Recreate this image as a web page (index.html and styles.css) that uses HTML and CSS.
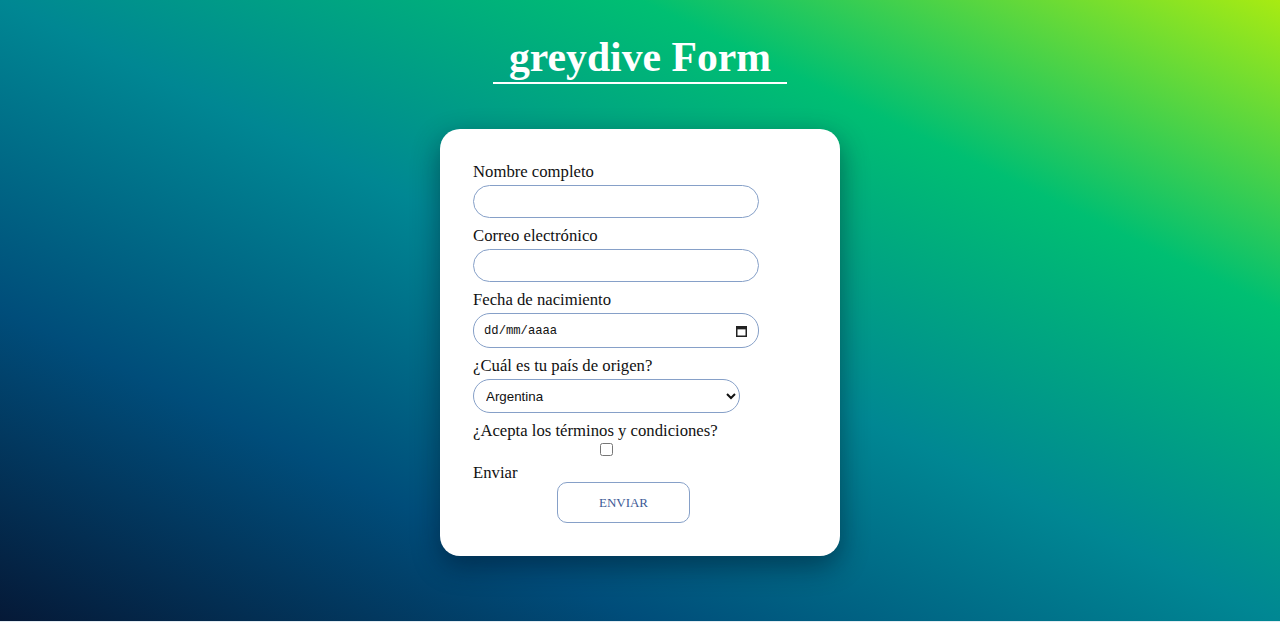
FILE: index.html
```html
<!DOCTYPE html>
<html lang="es">
<head>
<meta charset="utf-8">
<title>greydive Form</title>
<link rel="stylesheet" href="styles.css">
</head>
<body>
<div class="page">
  <h1 class="title">greydive Form</h1>
  <form class="card">
    <label class="label" for="nombre">Nombre completo</label>
    <input class="field" id="nombre" type="text">
    <label class="label" for="correo">Correo electrónico</label>
    <input class="field" id="correo" type="email">
    <label class="label">Fecha de nacimiento</label>
    <div class="field date-field">
      <span class="date-text">dd/mm/aaaa</span>
      <svg class="cal" width="11" height="12" viewBox="0 0 11 12" aria-hidden="true">
        <rect x="0.75" y="1.75" width="9.5" height="9.5" fill="none" stroke="#222" stroke-width="1.5"/>
        <rect x="0.75" y="1.75" width="9.5" height="2.6" fill="#222"/>
      </svg>
    </div>
    <label class="label" for="pais">¿Cuál es tu país de origen?</label>
    <select class="field select" id="pais">
      <option>Argentina</option>
      <option>Brasil</option>
      <option>Chile</option>
    </select>
    <label class="label" for="terminos">¿Acepta los términos y condiciones?</label>
    <input class="check" id="terminos" type="checkbox">
    <label class="label label-last">Enviar</label>
    <button class="btn" type="button">ENVIAR</button>
  </form>
</div>
</body>
</html>
```
FILE: styles.css
```css
html {
  background: #e4ecf3;
}
body {
  margin: 0;
}
.page {
  height: 621px;
  box-sizing: border-box;
  padding-top: 33px;
  display: flex;
  flex-direction: column;
  align-items: center;
  background: linear-gradient(to right top, #051937, #004d7a, #008793, #00bf72, #a8eb12);
}
.title {
  margin: 0;
  padding: 0 16px;
  font-family: "Liberation Serif", "Times New Roman", serif;
  font-weight: 700;
  font-size: 41.7px;
  line-height: 49px;
  color: #ffffff;
  border-bottom: 2px solid #ffffff;
}
.card {
  margin-top: 45px;
  width: 400px;
  box-sizing: border-box;
  padding: 33px 33px 33px;
  background: #ffffff;
  border-radius: 20px;
  box-shadow: 0 10px 28px rgba(0, 10, 30, 0.45);
  display: flex;
  flex-direction: column;
  align-items: flex-start;
}
.label {
  font-family: "Liberation Serif", "Times New Roman", serif;
  font-size: 16.7px;
  line-height: 20px;
  color: #111111;
  margin-bottom: 3px;
}
.label-last {
  margin-bottom: -1px;
}
.field {
  width: 286px;
  height: 33px;
  box-sizing: border-box;
  margin: 0 0 8px 0;
  border: 1px solid #86a0c8;
  border-radius: 17px;
  background: #ffffff;
  padding: 0 12px;
  font-family: "Liberation Sans", Arial, sans-serif;
  font-size: 13.33px;
  outline: none;
}
.date-field {
  height: 35px;
  display: flex;
  align-items: center;
  justify-content: space-between;
  padding: 0 11px 0 10px;
}
.date-text {
  font-family: "Liberation Mono", "Courier New", monospace;
  font-size: 12.2px;
  color: #111111;
}
.cal {
  display: block;
}
.select {
  width: 267px;
  height: 34px;
  padding: 0 8px;
  color: #111111;
}
.check {
  width: 13px;
  height: 13px;
  margin: -1px 0 7px 127px;
}
.btn {
  margin: 0 0 0 84px;
  width: 133px;
  height: 41px;
  border: 1px solid #86a0c8;
  border-radius: 10px;
  background: #ffffff;
  font-family: "Liberation Serif", "Times New Roman", serif;
  font-size: 13px;
  color: #3d5a96;
}
```
